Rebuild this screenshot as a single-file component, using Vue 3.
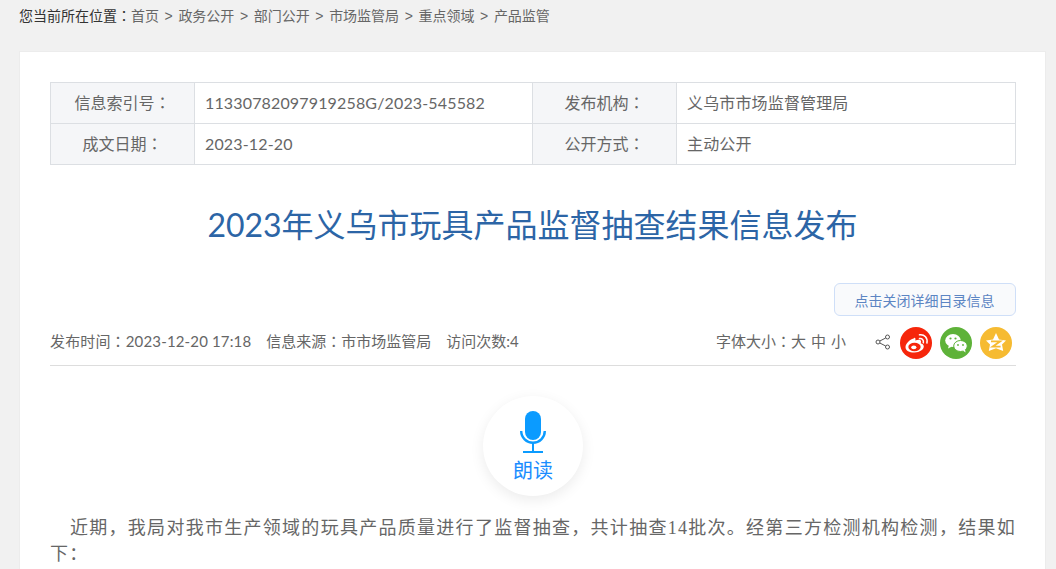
<template>
  <div class="page">
    <div class="crumbs">
      <span class="here">您当前所在位置<span class="colon">：</span></span>
      <template v-for="(c, i) in crumbs" :key="c">
        <span v-if="i" class="sep">&gt;</span><span>{{ c }}</span>
      </template>
    </div>

    <div class="card">
      <div class="meta">
        <div class="lab">信息索引号<span class="colon">：</span></div>
        <div class="val">11330782097919258G/2023-545582</div>
        <div class="lab">发布机构<span class="colon">：</span></div>
        <div class="val">义乌市市场监督管理局</div>
        <div class="lab">成文日期<span class="colon">：</span></div>
        <div class="val">2023-12-20</div>
        <div class="lab">公开方式<span class="colon">：</span></div>
        <div class="val">主动公开</div>
      </div>

      <h1 class="title">2023年义乌市玩具产品监督抽查结果信息发布</h1>

      <div class="toggle-row">
        <button class="toggle">点击关闭详细目录信息</button>
      </div>

      <div class="info">
        <div class="info-left">
          <span class="time">发布时间<span class="colon">：</span>2023-12-20 17:18</span>
          <span>信息来源<span class="colon">：</span>市市场监管局</span>
          <span>访问次数:4</span>
        </div>
        <div class="font-size">字体大小<span class="colon">：</span><span class="fs">大</span><span class="fs">中</span><span class="fs">小</span></div>
        <svg class="share" viewBox="0 0 16 16" width="16" height="16">
          <g fill="none" stroke="#555" stroke-width="1">
            <circle cx="12.5" cy="3" r="2" />
            <circle cx="3" cy="8" r="2" />
            <circle cx="12.5" cy="13" r="2" />
            <path d="M4.800 7l5.900-3M4.800 9l5.900 3" />
          </g>
        </svg>
        <span class="social weibo">
          <svg viewBox="0 0 32 32" width="32" height="32">
            <path fill="#fff" d="M13.600 11.600c-4 1.200-8.100 5.200-8.100 8.600 0 3.400 4.400 5.600 9 5.400 5.200-.2 9.300-3 9.300-6 0-2-1.700-3-3.100-3.400.6-1.400.4-2.600-.6-3.200-1.200-.6-3-.2-4.800.6.400-1.400.2-2.400-.4-2.800-.4-.2-.8 0-1.300.800z" />
            <ellipse cx="14.500" cy="20" rx="6.200" ry="4.200" fill="#f6260b" />
            <ellipse cx="13.800" cy="20.300" rx="2.600" ry="1.900" fill="#fff" />
            <path fill="none" stroke="#fff" stroke-width="1.500" stroke-linecap="round" d="M19.500 11.500c2.500-.5 4.500 1.500 3.800 4.200M19.500 7.800c5-.8 8.500 3.500 7.400 8.200" />
          </svg>
        </span>
        <span class="social wechat">
          <svg viewBox="0 0 32 32" width="32" height="32">
            <ellipse cx="13" cy="13.500" rx="7.800" ry="6.500" fill="#fff" />
            <path fill="#fff" d="M9 18l-1 3.500 4-2z" />
            <ellipse cx="20.500" cy="19" rx="6.800" ry="5.500" fill="#fff" stroke="#5eb239" stroke-width="1" />
            <path fill="#fff" d="M23 23.500l2.500 2-.5-3.500z" />
            <circle cx="10.500" cy="11.500" r="1.100" fill="#5eb239" />
            <circle cx="15.500" cy="11.500" r="1.100" fill="#5eb239" />
            <circle cx="18" cy="18" r=".9" fill="#5eb239" />
            <circle cx="23" cy="18" r=".9" fill="#5eb239" />
          </svg>
        </span>
        <span class="social qzone">
          <svg viewBox="0 0 32 32" width="32" height="32">
            <path fill="#fff" d="M16 6l3 6.500 7 .9-4 4 1.200 6.600-7.200-2.800-7.200 2.800 1.200-6.600-4-4 7-.9z" />
            <path fill="none" stroke="#f6bb32" stroke-width="1.800" d="M11 14.300h9.200l-7.600 5.400h8" />
          </svg>
        </span>
      </div>

      <div class="read-wrap">
        <div class="read">
          <svg viewBox="0 0 26 42" width="26" height="42">
            <rect x="5" y="0" width="16" height="29" rx="8" fill="#0b9bff" />
            <path d="M1.200 20a11.800 11.800 0 0 0 23.600 0" fill="none" stroke="#0b9bff" stroke-width="2.400" />
            <path d="M13 32v9M3 41h20" fill="none" stroke="#0b9bff" stroke-width="2" />
          </svg>
          <span class="read-label">朗读</span>
        </div>
      </div>

      <div class="content">
        <p>近期，我局对我市生产领域的玩具产品质量进行了监督抽查，共计抽查14批次。经第三方检测机构检测，结果如下：</p>
        <p class="center">义乌市玩具产品质量监督抽查结果表</p>
      </div>
    </div>
  </div>
</template>

<script setup>
const crumbs = ['首页', '政务公开', '部门公开', '市场监管局', '重点领域', '产品监管']
</script>

<style>
html, body {
  margin: 0;
  height: 569px;
  overflow: hidden;
}
</style>

<style scoped>
.page {
  background: #f1f1f1;
  height: 569px;
  overflow: hidden;
  padding: 0 19px;
  font-family: Lato, "Noto Sans CJK SC", sans-serif;
  color: #666;
}

.colon {
  font-family: "Noto Sans CJK TC", sans-serif;
}

.crumbs {
  height: 51px;
  box-sizing: border-box;
  padding-top: 6px;
  font-size: 14px;
  line-height: 18px;
  color: #666;
}

.here {
  color: #333;
}

.sep {
  margin: 0 5.6px;
  font-family: "Liberation Sans", sans-serif;
}

.card {
  width: 1027px;
  box-sizing: border-box;
  background: #fff;
  border: 1px solid #ececec;
  padding: 30px 30px 0;
  height: 600px;
}

.meta {
  display: grid;
  grid-template-columns: 144px 338px 144px 1fr;
  border: 1px solid #dcdfe3;
  border-bottom: none;
  width: 966px;
  box-sizing: border-box;
  font-size: 16px;
}

.lab, .val {
  height: 41px;
  line-height: 39px;
  box-sizing: border-box;
  border-bottom: 1px solid #dcdfe3;
  border-right: 1px solid #dcdfe3;
}

.lab {
  background: #f5f6f8;
  text-align: center;
}

.val {
  padding-left: 10px;
  letter-spacing: 0.15px;
}

.val:nth-child(4n) {
  border-right: none;
}

.title {
  margin: 0;
  padding-top: 38px;
  height: 118px;
  box-sizing: border-box;
  text-align: center;
  font-weight: 400;
  font-size: 32px;
  line-height: 44px;
  color: #2c65a6;
}

.toggle-row {
  display: flex;
  justify-content: flex-end;
  width: 966px;
}

.toggle {
  width: 182px;
  height: 33px;
  border: 1px solid #cfdff8;
  border-radius: 6px;
  background: #f9fafc;
  color: #5c85c3;
  font-size: 14px;
  font-family: inherit;
  padding: 0 1px 0 0;
}

.info {
  width: 966px;
  height: 49px;
  box-sizing: border-box;
  border-bottom: 1px solid #ddd;
  display: flex;
  align-items: center;
  font-size: 15px;
  padding: 0 4px 2px 0;
  margin-top: 1px;
}

.info-left {
  display: flex;
  gap: 15px;
  flex: 1;
}

.time {
  letter-spacing: 0.15px;
}

.fs {
  margin-right: 5px;
}

.share {
  margin: 4px 9px 0 24px;
}

.social {
  width: 32px;
  height: 32px;
  border-radius: 50%;
  margin: 6px 0 0 8px;
  display: block;
}

.share + .social {
  margin-left: 0;
}

.weibo { background: #f6260b; }
.wechat { background: #5eb239; }
.qzone { background: #f6bb32; }

.read-wrap {
  display: flex;
  justify-content: center;
  padding-top: 30px;
  width: 966px;
}

.read {
  width: 100px;
  height: 100px;
  border-radius: 50%;
  background: #fff;
  box-shadow: 0 4px 14px rgba(0, 0, 0, 0.08);
  display: flex;
  flex-direction: column;
  align-items: center;
  padding-top: 15px;
  box-sizing: border-box;
  color: #1a8cff;
  font-size: 20px;
  line-height: 24px;
}

.read svg {
  display: block;
}

.read-label {
  margin-top: 5px;
}

.content {
  width: 966px;
  margin-top: 19px;
  font-family: "Liberation Serif", "Noto Sans CJK SC", serif;
  font-size: 18px;
  line-height: 26px;
  letter-spacing: 1.25px;
  text-align: justify;
}

.content p {
  margin: 0;
  text-indent: 20px;
}

.content .center {
  margin-top: -1px;
  text-align: center;
  text-indent: 0;
}
</style>
